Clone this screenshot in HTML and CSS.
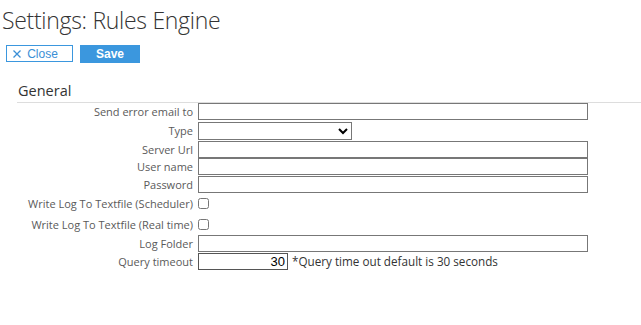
FILE: index.html
```html
<!DOCTYPE html>
<html lang="en">
<head>
    <meta charset="UTF-8">
    <meta name="viewport" content="width=device-width, initial-scale=1.0">
    <title>Settings: Rules Engine</title>
    <link rel="stylesheet" href="styles.css">
</head>
<body>

    <h1 class="title">Settings: Rules Engine</h1>

    <div class="toolbar">
        <button class="btn btn-close">
            <svg class="icon-x" width="8" height="8" viewBox="0 0 8 8">
                <path d="M0.5 0.5 L7.5 7.5 M7.5 0.5 L0.5 7.5" stroke="#3a8fd6" stroke-width="1.3" fill="none"/>
            </svg>
            Close
        </button>
        <button class="btn btn-save">Save</button>
    </div>

    <div class="section">
        <h2 class="section-title">General</h2>

        <div class="form">
            <div class="row">
                <label>Send error email to</label>
                <input type="text" class="field">
            </div>
            <div class="row row-select">
                <label>Type</label>
                <select class="field-select">
                    <option></option>
                </select>
            </div>
            <div class="row">
                <label>Server Url</label>
                <input type="text" class="field">
            </div>
            <div class="row">
                <label>User name</label>
                <input type="text" class="field">
            </div>
            <div class="row">
                <label>Password</label>
                <input type="password" class="field">
            </div>
            <div class="row row-check">
                <label>Write Log To Textfile (Scheduler)</label>
                <input type="checkbox" class="check">
            </div>
            <div class="row row-check">
                <label>Write Log To Textfile (Real time)</label>
                <input type="checkbox" class="check">
            </div>
            <div class="row">
                <label>Log Folder</label>
                <input type="text" class="field">
            </div>
            <div class="row">
                <label>Query timeout</label>
                <input type="text" class="field-num" value="30">
                <span class="note">*Query time out default is 30 seconds</span>
            </div>
        </div>
    </div>

</body>
</html>
```

FILE: styles.css
```css
*{
    margin: 0;
    padding: 0;
    box-sizing: border-box;
}

body{
    font-family: "Open Sans", sans-serif;
    color: #333;
    background: #fff;
}

.title{
    font-size: 23px;
    font-weight: 300;
    letter-spacing: -0.3px;
    line-height: 32px;
    margin: 4px 0 0 2px;
    color: #333;
}

.toolbar{
    display: flex;
    gap: 7px;
    margin: 9px 0 0 6px;
}

.btn{
    font-family: "Liberation Sans", Arial, sans-serif;
    font-size: 12px;
    height: 17px;
    border: 1px solid #3b97de;
    cursor: pointer;
    display: flex;
    align-items: center;
    justify-content: center;
}

.btn-close{
    width: 67px;
    background: #fff;
    color: #3a8fd6;
    gap: 6px;
    padding-right: 8px;
}

.btn-save{
    width: 60px;
    height: 18px;
    background: #3b97de;
    color: #fff;
    font-weight: bold;
}

.section{
    margin: 18px 0 0 17px;
}

.section-title{
    font-size: 14.5px;
    font-weight: normal;
    line-height: 20px;
    padding-left: 1px;
    border-bottom: 1px solid #ddd;
    padding-bottom: 1px;
}

.row{
    display: flex;
    align-items: center;
    height: 17.5px;
    font-size: 11px;
}

.row label{
    width: 181px;
    text-align: right;
    color: #5a5a5a;
    padding-right: 5px;
    white-space: nowrap;
}

.row-select{
    height: 20px;
}

.row-check{
    height: 21px;
}

.field{
    width: 390px;
    height: 17px;
    border: 1px solid #777;
    outline: none;
}

.field-select{
    width: 154px;
    height: 18px;
    border: 1px solid #777;
    border-radius: 0;
    background: #fff;
    font-size: 11px;
}

.check{
    width: 11px;
    height: 11px;
    margin: 0;
}

.field-num{
    width: 90px;
    height: 17px;
    border: 1px solid #555;
    text-align: right;
    font-family: "Liberation Sans", Arial, sans-serif;
    font-size: 13px;
    color: #000;
    padding-right: 2px;
    outline: none;
}

.note{
    font-size: 11.7px;
    color: #333;
    margin-left: 4px;
}
```
